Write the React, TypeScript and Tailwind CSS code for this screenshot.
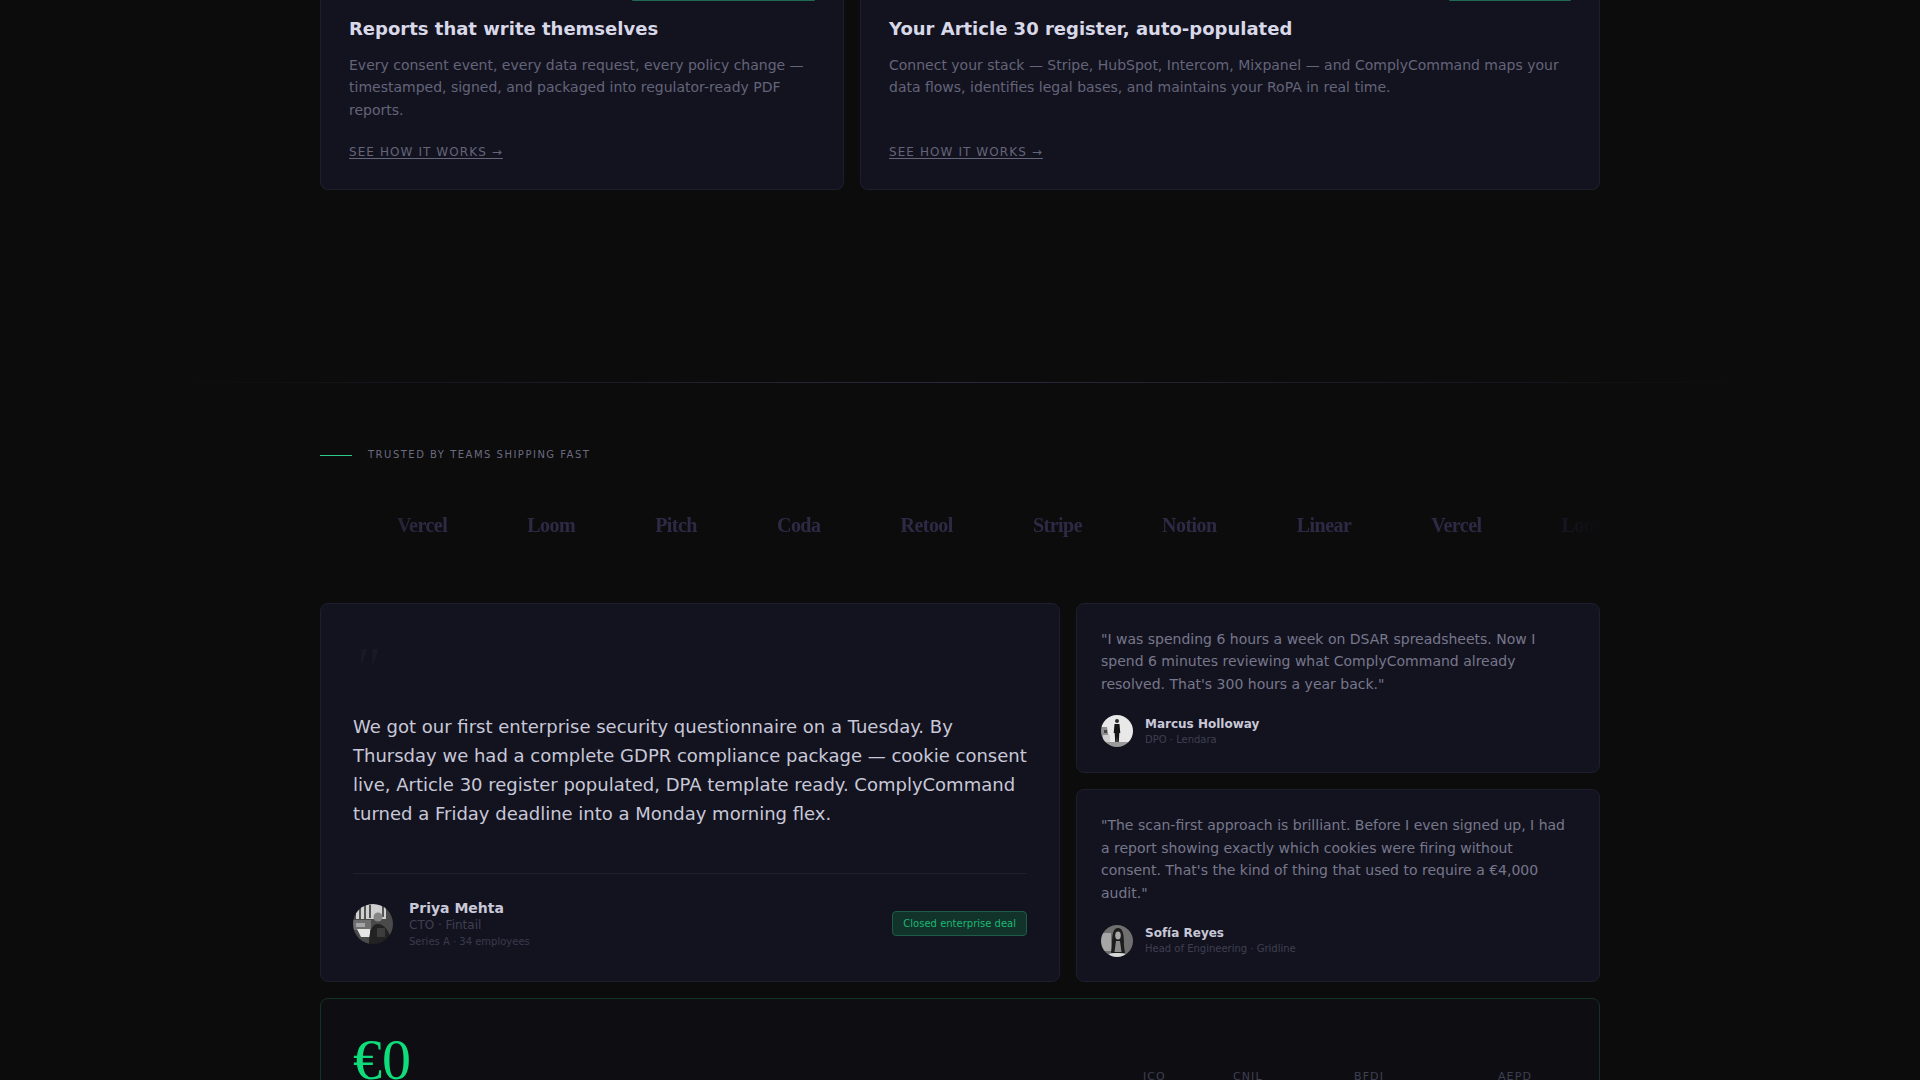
const sans = 'font-["DejaVu_Sans",sans-serif]';

const logos = ['Vercel', 'Loom', 'Pitch', 'Coda', 'Retool', 'Stripe', 'Notion', 'Linear', 'Vercel', 'Loom', 'Pitch'];

function PriyaAvatar() {
  return (
    <svg viewBox="0 0 40 40" className="h-10 w-10 shrink-0 rounded-full">
      <g className="blur-[0.5px]">
        <rect width="40" height="40" fill="#4a4a4a" />
        <rect x="3" y="0" width="30" height="15" fill="#cfcfcf" />
        <path d="M7 1v14M12 1v14M17 1v13M30 1v12" stroke="#2b2b2b" strokeWidth="1.500" />
        <rect x="0" y="16" width="18" height="10" fill="#6e6e6e" />
        <path d="M4 25h13v8H8z" fill="#e6e6e6" />
        <path d="M3 19h9v4H3z" fill="#a5a5a5" />
        <circle cx="25" cy="13" r="4.500" fill="#858585" />
        <path d="M16 40c0-13 3-20 9-20s11 6 15 20z" fill="#222" />
        <path d="M24 24h8v9h-8z" fill="#3d3d3d" />
      </g>
    </svg>
  );
}

function MarcusAvatar() {
  return (
    <svg viewBox="0 0 32 32" className="h-8 w-8 shrink-0 rounded-full">
      <g className="blur-[0.3px]">
        <rect width="32" height="32" fill="#e8e8e8" />
        <path d="M0 12h6l2 12H0z" fill="#8f8f8f" />
        <path d="M2 20h7v8H2z" fill="#d0d0d0" />
        <path d="M3 15h3v3H3z" fill="#444" />
        <circle cx="16" cy="6" r="2" fill="#2a2a2a" />
        <path d="M13.500 9h5l.8 9h-1l-.6 11h-1.400l-.3-8-.3 8h-1.400l-.6-11h-1z" fill="#151515" />
        <path d="M0 27h32v5H0z" fill="#9b9b9b" />
      </g>
    </svg>
  );
}

function SofiaAvatar() {
  return (
    <svg viewBox="0 0 32 32" className="h-8 w-8 shrink-0 rounded-full">
      <g className="blur-[0.4px]">
        <rect width="32" height="32" fill="#6f6f6f" />
        <rect x="0" y="8" width="10" height="18" fill="#a6a6a6" />
        <path d="M11 20c0-12 1.500-17 6-17s6 5 6 17c0 3 1 6 1 8H10c0-2 1-5 1-8z" fill="#1c1c1c" />
        <ellipse cx="17" cy="10.500" rx="2.800" ry="4" fill="#a9a9a9" />
        <path d="M15 16h4l1.500 11h-7z" fill="#8a8a8a" />
        <path d="M4 32c1-3 6-4 12-4s11 1 12 4z" fill="#d8d8d8" />
      </g>
    </svg>
  );
}

function FeatureCard({ title, body, barWidth }: { title: string; body: string; barWidth: string }) {
  return (
    <div className="flex h-full flex-col rounded-b-lg border border-t-0 border-[#1e1e2e] bg-[#13131f] px-7 pb-[28px]">
      <div className={`ml-auto h-px rounded-b-sm bg-[#1f6b52] ${barWidth}`} />
      <h3 className="mt-[17px] text-[18px] font-bold leading-[22px] text-[#d8d8e8]">{title}</h3>
      <p className="mt-[14px] h-[67px] text-[14px] leading-[22.4px] text-[#64647a]">{body}</p>
      <a className="mt-[22px] w-fit text-[12px] leading-[18px] tracking-[0.09em] text-[#64647a] underline underline-offset-2">
        SEE HOW IT WORKS →
      </a>
    </div>
  );
}

export default function App() {
  return (
    <div className={`${sans} h-[1080px] overflow-hidden bg-[#0c0c0d]`}>
      <section className="mx-auto w-[1280px]">
        <div className="grid grid-cols-[524px_740px] gap-4">
          <FeatureCard
            title="Reports that write themselves"
            barWidth="w-[183px]"
            body="Every consent event, every data request, every policy change — timestamped, signed, and packaged into regulator-ready PDF reports."
          />
          <FeatureCard
            title="Your Article 30 register, auto-populated"
            barWidth="w-[122px]"
            body="Connect your stack — Stripe, HubSpot, Intercom, Mixpanel — and ComplyCommand maps your data flows, identifies legal bases, and maintains your RoPA in real time."
          />
        </div>
      </section>

      <div className="mt-[192px] h-px bg-gradient-to-r from-transparent from-[8%] via-[#2a2a3e] to-transparent to-[92%]" />

      <section className="mx-auto w-[1280px] pt-[64px]">
        <div className="flex items-center gap-4">
          <span className="h-px w-8 bg-[#2bc98a]" />
          <span className="text-[10px] leading-[16px] tracking-[0.15em] text-[#6b6b80]">TRUSTED BY TEAMS SHIPPING FAST</span>
        </div>

        <div className="mt-[49px] overflow-hidden [mask-image:linear-gradient(to_right,transparent,black_8%,black_92%,transparent)]">
          <div className="flex gap-20 whitespace-nowrap pl-[77px] font-['Liberation_Serif',serif] text-[20px] font-bold leading-[26px] tracking-[-0.026em] text-[#2e2a45]">
            {logos.map((name, i) => (
              <span key={i}>{name}</span>
            ))}
          </div>
        </div>

        <div className="mt-[65px] grid grid-cols-[740px_524px] grid-rows-[170px_193px] gap-4">
          <div className="row-span-2 flex flex-col rounded-lg border border-[#1e1e2e] bg-[#13131f] px-8 pt-8">
            <div className="h-[68px] pt-[8px] font-['Liberation_Serif',serif] text-[60px] italic leading-[48px] text-[#191926]">"</div>
            <p className="mt-[9.4px] text-[18px] leading-[28.8px] text-[#c8c8d8]">
              We got our first enterprise security questionnaire on a Tuesday. By Thursday we had a complete GDPR compliance package — cookie consent live, Article 30 register populated, DPA template ready. ComplyCommand turned a Friday deadline into a Monday morning flex.
            </p>
            <div className="mt-[44.6px] flex items-center border-t border-[#1e1e2e] pt-[25px]">
              <PriyaAvatar />
              <div className="ml-4">
                <div className="text-[14px] font-bold leading-[18px] text-[#c8c8d8]">Priya Mehta</div>
                <div className="text-[12px] leading-[17px] text-[#3f3f52]">CTO · Fintail</div>
                <div className="text-[10px] leading-[15px] text-[#3a3a4c]">Series A · 34 employees</div>
              </div>
              <span className="mb-[2px] ml-auto rounded-sm border border-[#1e5c48] bg-[#123329] px-[10px] py-[4px] text-[10px] leading-[15px] text-[#1cb877]">
                Closed enterprise deal
              </span>
            </div>
          </div>

          <div className="flex flex-col rounded-lg border border-[#1e1e2e] bg-[#13131f] px-6 pt-6">
            <p className="text-[14px] leading-[22.4px] text-[#77778c]">
              "I was spending 6 hours a week on DSAR spreadsheets. Now I spend 6 minutes reviewing what ComplyCommand already resolved. That's 300 hours a year back."
            </p>
            <div className="mt-5 flex items-center gap-3">
              <MarcusAvatar />
              <div>
                <div className="text-[12px] font-bold leading-[16px] text-[#c8c8d8]">Marcus Holloway</div>
                <div className="text-[10px] leading-[15px] text-[#3f3f52]">DPO · Lendara</div>
              </div>
            </div>
          </div>

          <div className="flex flex-col rounded-lg border border-[#1e1e2e] bg-[#13131f] px-6 pt-[24.4px]">
            <p className="text-[14px] leading-[22.4px] text-[#77778c]">
              "The scan-first approach is brilliant. Before I even signed up, I had a report showing exactly which cookies were firing without consent. That's the kind of thing that used to require a €4,000 audit."
            </p>
            <div className="mt-[20.6px] flex items-center gap-3">
              <SofiaAvatar />
              <div>
                <div className="text-[12px] font-bold leading-[16px] text-[#c8c8d8]">Sofía Reyes</div>
                <div className="text-[10px] leading-[15px] text-[#3f3f52]">Head of Engineering · Gridline</div>
              </div>
            </div>
          </div>
        </div>

        <div className="mt-4 flex h-[120px] items-start rounded-lg border border-[#123225] bg-[#0e0e12] px-8 pt-[29px]">
          <span className="font-['Liberation_Serif',serif] text-[58px] leading-[64px] text-[#0fdc7a]">€0</span>
          <div className="relative ml-auto mr-[38px] mt-[41px] grid w-[386px] grid-cols-[90px_121px_144px_31px] text-[11px] leading-[16px] tracking-[0.1em] text-[#3f3f52]">
            <span>ICO</span>
            <span>CNIL</span>
            <span>BFDI</span>
            <span>AEPD</span>
          </div>
        </div>
      </section>
    </div>
  );
}
